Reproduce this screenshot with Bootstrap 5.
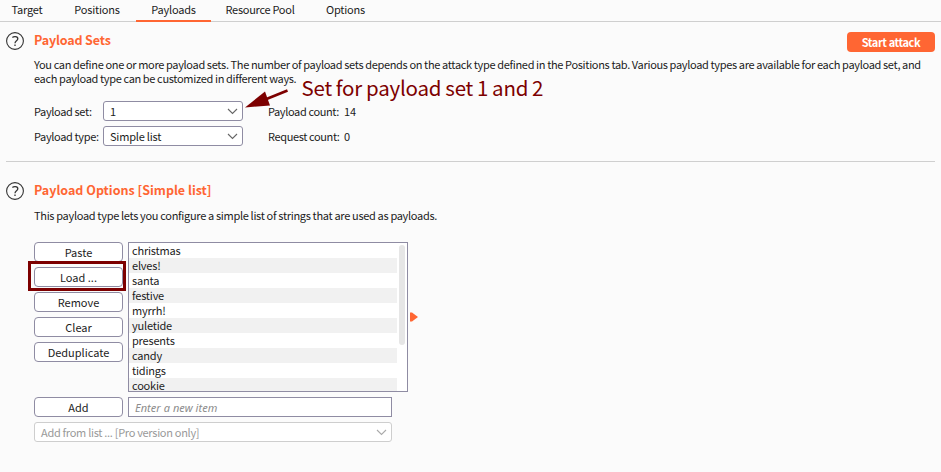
<!DOCTYPE html>
<html lang="en">
<head>
<meta charset="utf-8">
<meta name="viewport" content="width=device-width, initial-scale=1">
<title>Payloads</title>
<link href="https://cdn.jsdelivr.net/npm/bootstrap@5.3.0/dist/css/bootstrap.min.css" rel="stylesheet">
<style>
body{background:#fbfbfb;color:#1c1c1c;font-family:"Noto Sans CJK JP","Noto Sans",sans-serif;font-size:11px;line-height:14px;letter-spacing:-.2px;height:472px;overflow:hidden}
.tabs{height:22px;border-bottom:1px solid #cfcfcf;--bs-nav-link-color:#1c1c1c;--bs-nav-link-hover-color:#1c1c1c}
.tabs .nav-link{height:22px;padding:2px 0 0;font-size:11px;line-height:14px;text-align:center}
.tabs .nav-link.active{border-bottom:2px solid #ff6633}
.t1{width:54px}.tabs .t2{width:82px;padding-left:4px}.t3{width:75px}.t4{width:98px;letter-spacing:-.28px}.t5{width:73px}
.section-title{color:#ff6633;font-size:12.5px;line-height:16px;font-weight:700;letter-spacing:0}
.sets .section-title{letter-spacing:-.15px}
.help-col{width:28px}
.start{width:88px;height:20px;background:#ff6633;color:#fff;border:0;border-radius:4px;padding:0;font-size:11px;line-height:20px;font-weight:700;letter-spacing:-.4px}
.desc{letter-spacing:-.32px;word-spacing:-.18px}
.opts .desc{letter-spacing:-.31px;word-spacing:-.08px;margin-top:10px}
.pick{border:1px solid #8f8ca3;border-radius:3px;background:#fff;height:20px;padding:0 4px 0 6px;line-height:14px}
.pick span{padding-bottom:1px}
.pick-main{width:140px}
.pick-pro{width:358px;border-color:#cecece;color:#999;margin-top:5px;letter-spacing:-.3px}
.lbl{width:69px;white-space:nowrap;letter-spacing:-.36px;padding-bottom:1px}
.cnt{margin-left:25px;width:76px;white-space:nowrap;letter-spacing:-.38px}
.row-a{margin-top:16px}
.row-b{margin-top:5px}
.act{width:89px;height:20px;border:1px solid #8f8ca3;border-radius:4px;background:#fff;color:#1c1c1c;padding:0;font-size:11px;line-height:18px}
.stack{gap:5px}
.list-row{margin-top:20px}
.items{width:280px;height:150px;border:1px solid #8f8ca3;background:#fff;overflow:hidden;margin-left:5px}
.items .list-group{width:268px}
.items .list-group-item{height:15px;flex:none;line-height:14px;padding:0 3px;border:0;color:#1c1c1c;background:#fff}
.items .list-group-item:nth-child(even){background:#f1f1f1}
.thumb{width:6px;height:100px;margin:2px;border-radius:3px;background:#e6e6e6}
.entry{width:264px;height:20px;border:1px solid #8f8ca3;border-radius:0;margin-left:5px;padding:0 6px;font-family:"Noto Sans",sans-serif;font-size:11px;line-height:18px;font-style:italic;letter-spacing:.05px}
.entry::placeholder{color:#8c8c8c}
.rule{height:1px;background:#cfcfcf;margin:15px 6px 0}
.sets{padding:10px 6px 0}
.opts{padding:20px 6px 0}
.sets-text{margin-top:5px}
.note{left:301.5px;top:73px;font-size:20.5px;line-height:28px;color:#7d0000;letter-spacing:-.2px;word-spacing:-.5px;white-space:nowrap}
.arrow{left:240px;top:84px}
.frame-mark{left:-6px;top:-6px;width:98px;height:30px;border:3px solid #7d0000}
</style>
<script src="https://cdn.jsdelivr.net/npm/bootstrap@5.3.0/dist/js/bootstrap.bundle.min.js" defer></script>
</head>
<body class="position-relative">
<ul class="nav flex-nowrap tabs">
  <li class="nav-item"><a class="nav-link t1">Target</a></li>
  <li class="nav-item"><a class="nav-link t2">Positions</a></li>
  <li class="nav-item"><a class="nav-link active t3">Payloads</a></li>
  <li class="nav-item"><a class="nav-link t4">Resource Pool</a></li>
  <li class="nav-item"><a class="nav-link t5">Options</a></li>
</ul>

<section class="sets d-flex">
  <div class="help-col flex-shrink-0">
    <svg class="d-block" width="18" height="18" viewBox="0 0 18 18" fill="none" stroke="#333"><circle cx="9" cy="9" r="8.4" stroke-width="1.1"/><path d="M6.4 5.4C7.4 4.6 11.8 3.9 11.8 6.8C11.8 8.8 9 8.8 9 11.2M9 12.6v1.5" stroke-width="1.3"/></svg>
  </div>
  <div class="flex-grow-1">
    <div class="d-flex justify-content-between">
      <h2 class="section-title m-0">Payload Sets</h2>
      <button class="btn start">Start attack</button>
    </div>
    <p class="mb-0 desc sets-text text-nowrap">You can define one or more payload sets. The number of payload sets depends on the attack type defined in the Positions tab. Various payload types are available for each payload set, and<br>each payload type can be customized in different ways.</p>
    <div class="d-flex align-items-center row-a">
      <span class="lbl">Payload set:</span>
      <div class="pick pick-main d-flex align-items-center justify-content-between"><span>1</span><svg width="11" height="7" fill="none" stroke="#666" stroke-width="1.1"><path d="M1 1L5.5 5.5L10 1"/></svg></div>
      <span class="cnt pb-px">Payload count:</span><span>14</span>
    </div>
    <div class="d-flex align-items-center row-b">
      <span class="lbl">Payload type:</span>
      <div class="pick pick-main d-flex align-items-center justify-content-between"><span>Simple list</span><svg width="11" height="7" fill="none" stroke="#666" stroke-width="1.1"><path d="M1 1L5.5 5.5L10 1"/></svg></div>
      <span class="cnt">Request count:</span><span>0</span>
    </div>
  </div>
</section>
<div class="rule"></div>

<section class="opts d-flex">
  <div class="help-col flex-shrink-0">
    <svg class="d-block" width="18" height="18" viewBox="0 0 18 18" fill="none" stroke="#333"><circle cx="9" cy="9" r="8.4" stroke-width="1.1"/><path d="M6.4 5.4C7.4 4.6 11.8 3.9 11.8 6.8C11.8 8.8 9 8.8 9 11.2M9 12.6v1.5" stroke-width="1.3"/></svg>
  </div>
  <div>
    <h2 class="section-title m-0">Payload Options [Simple list]</h2>
    <p class="mb-0 desc">This payload type lets you configure a simple list of strings that are used as payloads.</p>
    <div class="d-flex list-row">
      <div class="d-flex flex-column stack">
        <button class="btn act">Paste</button>
        <div class="position-relative"><button class="btn act d-block">Load ...</button><span class="position-absolute frame-mark"></span></div>
        <button class="btn act">Remove</button>
        <button class="btn act">Clear</button>
        <button class="btn act">Deduplicate</button>
      </div>
      <div class="items d-flex">
        <ul class="list-group list-group-flush rounded-0">
          <li class="list-group-item">christmas</li>
          <li class="list-group-item">elves!</li>
          <li class="list-group-item">santa</li>
          <li class="list-group-item">festive</li>
          <li class="list-group-item">myrrh!</li>
          <li class="list-group-item">yuletide</li>
          <li class="list-group-item">presents</li>
          <li class="list-group-item">candy</li>
          <li class="list-group-item">tidings</li>
          <li class="list-group-item">cookie</li>
        </ul>
        <div class="thumb"></div>
      </div>
      <svg class="align-self-center" width="12" height="10" fill="#ff6633"><path d="M2 .5h2L10 5L4 9.5H2z"/></svg>
    </div>
    <div class="d-flex row-b">
      <button class="btn act">Add</button>
      <input class="form-control entry" placeholder="Enter a new item">
    </div>
    <div class="pick pick-pro d-flex align-items-center justify-content-between"><span>Add from list ... [Pro version only]</span><svg width="11" height="7" fill="none" stroke="#aaa" stroke-width="1.1"><path d="M1 1L5.5 5.5L10 1"/></svg></div>
  </div>
</section>

<svg class="position-absolute arrow" width="54" height="30"><path d="M47.5 6.5L24 16" stroke="#7d0000" stroke-width="2.8" fill="none"/><path d="M5 23.5L25 7.5L30 21.5Z" fill="#7d0000"/></svg>
<div class="position-absolute note">Set for payload set 1 and 2</div>
</body>
</html>
